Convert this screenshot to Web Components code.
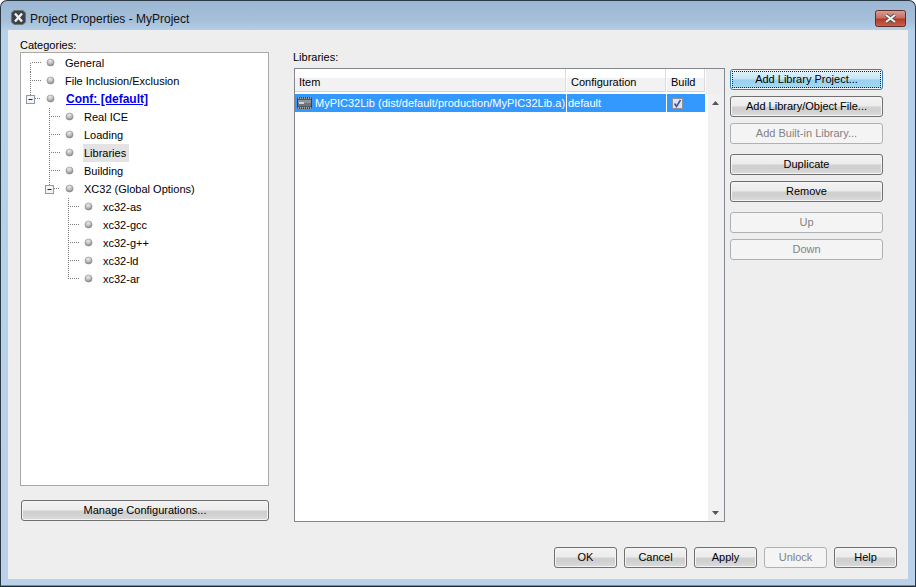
<!DOCTYPE html>
<html>
<head>
<meta charset="utf-8">
<title>Project Properties - MyProject</title>
<style>
    html, body { margin: 0; padding: 0; background: #fff; }
    body { font: 11px/13px "Liberation Sans", Arial, sans-serif; color: #000; }
</style>
</head>
<body>
<project-window heading="Project Properties - MyProject">
    <div slot="categories-label">Categories:</div>
    <category-tree slot="tree">
        <tree-row link="first">General</tree-row>
        <tree-row link="mid">File Inclusion/Exclusion</tree-row>
        <tree-row link="last" box bold>Conf: [default]</tree-row>
        <tree-row level="1" link="mid">Real ICE</tree-row>
        <tree-row level="1" link="mid">Loading</tree-row>
        <tree-row level="1" link="mid" active>Libraries</tree-row>
        <tree-row level="1" link="mid">Building</tree-row>
        <tree-row level="1" link="last" box>XC32 (Global Options)</tree-row>
        <tree-row level="2" link="mid">xc32-as</tree-row>
        <tree-row level="2" link="mid">xc32-gcc</tree-row>
        <tree-row level="2" link="mid">xc32-g++</tree-row>
        <tree-row level="2" link="mid">xc32-ld</tree-row>
        <tree-row level="2" link="last">xc32-ar</tree-row>
    </category-tree>
    <ui-button slot="manage">Manage Configurations...</ui-button>

    <div slot="libraries-label">Libraries:</div>
    <library-table slot="table"></library-table>

    <ui-button slot="actions" focused>Add Library Project...</ui-button>
    <ui-button slot="actions">Add Library/Object File...</ui-button>
    <ui-button slot="actions" disabled>Add Built-in Library...</ui-button>
    <ui-button slot="actions" style="margin-top:4px">Duplicate</ui-button>
    <ui-button slot="actions">Remove</ui-button>
    <ui-button slot="actions" disabled style="margin-top:4px">Up</ui-button>
    <ui-button slot="actions" disabled>Down</ui-button>

    <ui-button slot="footer">OK</ui-button>
    <ui-button slot="footer">Cancel</ui-button>
    <ui-button slot="footer">Apply</ui-button>
    <ui-button slot="footer" disabled>Unlock</ui-button>
    <ui-button slot="footer">Help</ui-button>
</project-window>

<script>
class uiButton extends HTMLElement {
    constructor() {
        super();
        this.attachShadow({ mode: "open" });
        this.shadowRoot.innerHTML = `
            <style>
                :host {
                    display: flex;
                    align-items: center;
                    justify-content: center;
                    box-sizing: border-box;
                    height: 21px;
                    border: 1px solid #707070;
                    border-radius: 3px;
                    background: linear-gradient(#f3f3f3 0, #ebebeb 48%, #d0d0d0 52%, #d0d0d0 70%, #dcdcdc 100%);
                    box-shadow: inset 0 0 0 1px #f4f4f4;
                    position: relative;
                }
                :host([disabled]) {
                    border-color: #adb2b5;
                    background: #f4f4f4;
                    box-shadow: none;
                    color: #838383;
                }
                :host([focused]) {
                    border-color: #3c7fb1;
                    background: linear-gradient(#e5f4fc 0, #c4e5f6 48%, #98d1ef 52%, #a8d8f2 100%);
                }
                .focus {
                    display: none;
                    position: absolute;
                    inset: 1px;
                    border: 1px dotted #222;
                }
                :host([focused]) .focus { display: block; }
                span { white-space: nowrap; }
            </style>
            <div class="focus"></div>
            <span><slot></slot></span>
        `;
    }
}

class treeRow extends HTMLElement {
    constructor() {
        super();
        this.attachShadow({ mode: "open" });
    }

    getLines() {
        const link = this.getAttribute("link");
        const box = this.hasAttribute("box");
        const top = link === "first" ? 9 : 0;
        const bottom = link === "last" ? (box ? 5 : 9) : 18;
        return `
            <path d="M9.5 ${top}V${bottom}M${box ? 14 : 11} 8.5H20" fill="none" stroke="#7a7a7a" stroke-dasharray="1 1"/>
            ${box ? `
                <rect x="5.5" y="5.5" width="8" height="8" fill="#f4f4f4" stroke="#8f9aa8"/>
                <path d="M7.5 9.5H11.5" stroke="#222"/>
            ` : ""}
        `;
    }

    connectedCallback() {
        const level = Number(this.getAttribute("level") || 0);
        this.shadowRoot.innerHTML = `
            <style>
                :host {
                    display: flex;
                    height: 18px;
                    align-items: stretch;
                    padding-left: ${level * 19}px;
                }
                svg { flex: none; display: block; }
                .text {
                    padding: 0 1px;
                    line-height: 19px;
                    height: 18px;
                    white-space: nowrap;
                }
                :host([active]) .text { background: #e3e3e3; padding-right: 3px; }
                :host([bold]) svg { margin-right: 1px; }
                :host([bold]) .text {
                    color: #0000f0;
                    font-weight: bold;
                    font-size: 12px;
                    text-decoration: underline;
                }
            </style>
            <svg width="43" height="18" viewBox="0 0 43 18">
                <defs>
                    <radialGradient id="ball" cx="0.45" cy="0.3" r="0.75">
                        <stop offset="0" stop-color="#ececec"/>
                        <stop offset="0.55" stop-color="#b8b8b8"/>
                        <stop offset="1" stop-color="#6f6f6f"/>
                    </radialGradient>
                </defs>
                ${this.getLines()}
                <circle cx="29.5" cy="8.5" r="3.6" fill="url(#ball)" stroke="#8a8a8a" stroke-width="0.5"/>
            </svg>
            <div class="text"><slot></slot></div>
        `;
    }
}

class categoryTree extends HTMLElement {
    constructor() {
        super();
        this.attachShadow({ mode: "open" });
        this.shadowRoot.innerHTML = `
            <style>
                :host {
                    display: block;
                    box-sizing: border-box;
                    height: 434px;
                    padding: 1px 0 0 0;
                    background: #fff;
                    border: 1px solid #a9a9a9;
                }
            </style>
            <slot></slot>
        `;
    }
}

class libraryTable extends HTMLElement {
    constructor() {
        super();
        this.attachShadow({ mode: "open" });
        this.shadowRoot.innerHTML = `
            <style>
                :host {
                    display: flex;
                    box-sizing: border-box;
                    height: 454px;
                    background: #fff;
                    border: 1px solid #828790;
                }
                .body { width: 411px; flex: none; }
                .head, .row { display: grid; grid-template-columns: 272px 100px 39px; }
                .head { height: 23px; margin-bottom: 2px; }
                .head div {
                    box-sizing: border-box;
                    padding: 7px 0 0 4px;
                    background: linear-gradient(#fff 9px, #f2f2f2 9px, #f2f2f2 22px, #d5d5d5 22px);
                    border-right: 1px solid #fff;
                    box-shadow: inset -1px 0 0 #dcdcdc;
                }
                .row { height: 18px; background: #3399ff; color: #fff; line-height: 19px; }
                .row > div { box-sizing: border-box; border-right: 1px solid #fff; white-space: nowrap; overflow: hidden; }
                .item { display: flex; gap: 3px; padding-left: 2px; }
                .item svg { flex: none; margin-top: 2px; }
                .conf { padding-left: 1px; }
                .build { display: flex; padding: 4px 0 0 5px; }
                .build svg { display: block; }
                .gutter { width: 2px; margin-top: 25px; flex: none; }
                .bar {
                    flex: 1;
                    display: flex;
                    flex-direction: column;
                    background: #f1f1f1;
                }
                .top { height: 25px; margin-left: -2px; background: #efefef; }
                .bar svg { display: block; margin-left: 4px; }
                .up { margin-top: 7px; }
                .down { margin-bottom: 6px; }
                .track { flex: 1; display: flex; flex-direction: column; justify-content: space-between; }
            </style>
            <div class="body">
                <div class="head">
                    <div>Item</div>
                    <div>Configuration</div>
                    <div>Build</div>
                </div>
                <div class="row">
                    <div class="item">
                        <svg width="15" height="14" viewBox="0 0 15 14">
                            <rect x="0.5" y="1.5" width="14" height="11" rx="1" fill="#55595d" stroke="#3d4144"/>
                            <rect x="1" y="4" width="13" height="3" fill="#8f9498"/>
                            <rect x="1" y="7" width="13" height="3" fill="#6f7478"/>
                            <rect x="2" y="6" width="5" height="2" fill="#d0d3d6"/>
                            <path d="M1 2H14M1 12H14" stroke="#e8e8e8" stroke-dasharray="1 1"/>
                        </svg>
                        <span>MyPIC32Lib (dist/default/production/MyPIC32Lib.a)</span>
                    </div>
                    <div class="conf">default</div>
                    <div class="build">
                        <svg width="11" height="11" viewBox="0 0 11 11">
                            <rect x="0.5" y="0.5" width="10" height="10" fill="#dfe5ee" stroke="#8c939b"/>
                            <path d="M2.5 5.5L4.5 8.5L8.5 2" fill="none" stroke="#3a50a8" stroke-width="1.5"/>
                        </svg>
                    </div>
                </div>
            </div>
            <div class="gutter"></div>
            <div class="bar">
                <div class="top"></div>
                <div class="track">
                    <svg class="up" width="7" height="4" viewBox="0 0 7 4"><path d="M3.5 0L7 4H0Z" fill="#555"/></svg>
                    <svg class="down" width="7" height="4" viewBox="0 0 7 4"><path d="M0 0H7L3.5 4Z" fill="#555"/></svg>
                </div>
            </div>
        `;
    }
}

class projectWindow extends HTMLElement {
    constructor() {
        super();
        this.attachShadow({ mode: "open" });
    }

    connectedCallback() {
        this.shadowRoot.innerHTML = `
            <style>
                :host {
                    display: block;
                    box-sizing: border-box;
                    width: 916px;
                    height: 587px;
                    border: 1px solid #2b3a44;
                    border-bottom-color: #1b2a34;
                    border-radius: 7px 7px 0 0;
                    background: linear-gradient(#9bb7d3 0, #a6c0da 20px, #b6d0e9 30px, #b9d2ea 100%);
                    box-shadow: inset 0 -1px 0 #17b7c9;
                    overflow: hidden;
                }
                .title {
                    display: flex;
                    align-items: flex-start;
                    height: 29px;
                    padding: 0 9px 0 10px;
                }
                .title .app { flex: none; margin: 9px 4px 0 0; }
                .title .name { flex: 1; font-size: 12px; margin-top: 12px; color: #111; }
                .close { flex: none; display: block; margin-top: 9px; }
                .client {
                    margin: 0 7px;
                    height: 549px;
                    box-sizing: border-box;
                    background: #eeeeee;
                    padding-left: 12px;
                }
                .main { display: flex; height: 492px; }
                .left { width: 249px; flex: none; margin-right: 25px; }
                .left .label { height: 13px; padding-top: 9px; }
                .left ::slotted([slot="manage"]) { margin: 14px 0 0 1px; width: 248px; }
                .middle { width: 431px; flex: none; margin-right: 5px; }
                .middle .label { padding-top: 21px; box-sizing: border-box; height: 38px; margin-left: -1px; }
                .actions { width: 153px; flex: none; padding-top: 39px; display: flex; flex-direction: column; gap: 6px; }
                .footer {
                    display: grid;
                    grid-template-columns: repeat(5, 63px);
                    gap: 7px;
                    justify-content: end;
                    padding: 25px 11px 0 0;
                }
            </style>
            <div class="title">
                <svg class="app" width="15" height="15" viewBox="0 0 15 15">
                    <path d="M3 .5H12L14.5 3V12L12 14.5H3L.5 12V3Z" fill="#3c4348" stroke="#6d7478"/>
                    <path d="M4 3.5L11 11.5M11 3.5L4 11.5" stroke="#f1f1f1" stroke-width="2.4"/>
                </svg>
                <div class="name">${this.getAttribute("heading")}</div>
                <svg class="close" width="31" height="17" viewBox="0 0 31 17">
                    <defs>
                        <linearGradient id="red" x1="0" y1="0" x2="0" y2="1">
                            <stop offset="0" stop-color="#d9a196"/>
                            <stop offset="0.45" stop-color="#c5705f"/>
                            <stop offset="0.55" stop-color="#b33b26"/>
                            <stop offset="1" stop-color="#c9644f"/>
                        </linearGradient>
                    </defs>
                    <rect x="0.5" y="0.5" width="30" height="16" rx="2" fill="url(#red)" stroke="#5f2f2a"/>
                    <path d="M11 5L20 12M20 5L11 12" stroke="#4b4b4b" stroke-width="3.6"/>
                    <path d="M11 5L20 12M20 5L11 12" stroke="#eef0f2" stroke-width="2.2"/>
                </svg>
            </div>
            <div class="client">
                <div class="main">
                    <div class="left">
                        <div class="label"><slot name="categories-label"></slot></div>
                        <slot name="tree"></slot>
                        <slot name="manage"></slot>
                    </div>
                    <div class="middle">
                        <div class="label"><slot name="libraries-label"></slot></div>
                        <slot name="table"></slot>
                    </div>
                    <div class="actions"><slot name="actions"></slot></div>
                </div>
                <div class="footer"><slot name="footer"></slot></div>
            </div>
        `;
    }
}

customElements.define("ui-button", uiButton);
customElements.define("tree-row", treeRow);
customElements.define("category-tree", categoryTree);
customElements.define("library-table", libraryTable);
customElements.define("project-window", projectWindow);
</script>
</body>
</html>
